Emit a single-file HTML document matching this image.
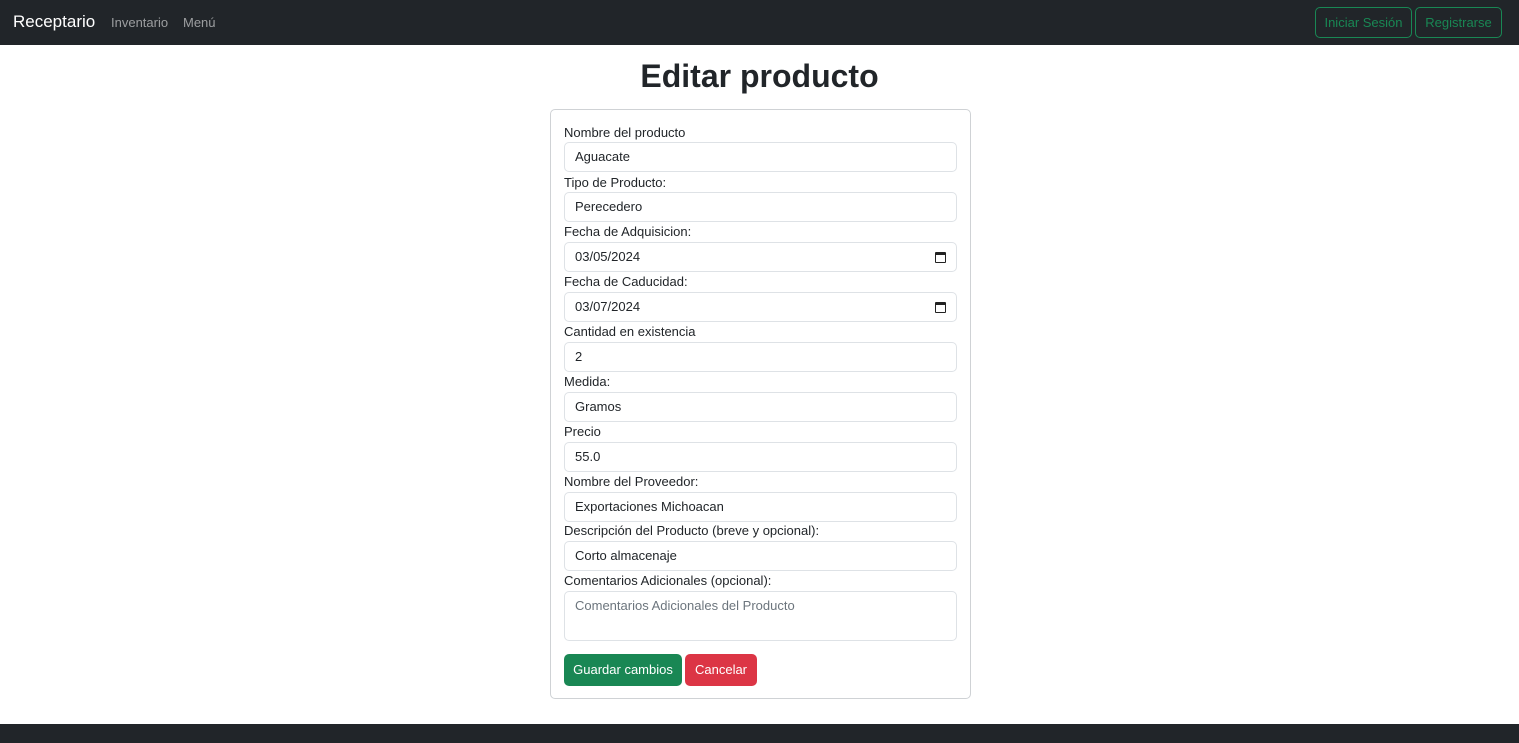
<!DOCTYPE html>
<html><head><meta charset="utf-8"><style>
*{box-sizing:border-box;margin:0;padding:0}
body{width:1519px;height:743px;background:#fff;font-family:"Liberation Sans",sans-serif;color:#212529;position:relative;overflow:hidden}
nav{position:absolute;left:0;top:0;width:1519px;height:45px;background:#212529}
.brand{position:absolute;left:13px;top:12px;font-size:17px;color:#fff}
.nl{position:absolute;top:15px;font-size:13px;color:rgba(255,255,255,.55)}
.ob{position:absolute;top:7px;height:31px;border:1px solid #198754;border-radius:5px;color:#198754;font-size:13px;line-height:29px;text-align:center}
h1{position:absolute;top:58px;left:0;width:1519px;text-align:center;font-size:32px;font-weight:bold}
.card{position:absolute;left:550px;top:109px;width:421px;height:590px;border:1px solid #cfd2d5;border-radius:5px}
.lab{position:absolute;left:13px;font-size:13px}
.inp{position:absolute;left:13px;width:393px;height:30px;border:1px solid #dee2e6;border-radius:5px;font-size:13px;line-height:28px;padding-left:10px}
.cal{position:absolute;right:10px;top:9px;width:11px;height:11px;border:1.5px solid #222;border-top-width:3px;border-radius:1px}
.btn{position:absolute;top:544px;height:32px;border-radius:5px;color:#fff;font-size:13px;line-height:32px;text-align:center}
footer{position:absolute;left:0;top:724px;width:1519px;height:19px;background:#212529}
</style></head><body>
<nav><span class="brand">Receptario</span><span class="nl" style="left:111px">Inventario</span><span class="nl" style="left:183px">Menú</span>
<div class="ob" style="left:1315px;width:97px">Iniciar Sesión</div><div class="ob" style="left:1415px;width:87px">Registrarse</div></nav>
<h1>Editar producto</h1>
<div class="card">
<div class="lab" style="top:15px">Nombre del producto</div><div class="inp" style="top:32px">Aguacate</div>
<div class="lab" style="top:65px">Tipo de Producto:</div><div class="inp" style="top:82px">Perecedero</div>
<div class="lab" style="top:114px">Fecha de Adquisicion:</div><div class="inp" style="top:132px">03/05/2024<span class="cal"></span></div>
<div class="lab" style="top:164px">Fecha de Caducidad:</div><div class="inp" style="top:182px">03/07/2024<span class="cal"></span></div>
<div class="lab" style="top:214px">Cantidad en existencia</div><div class="inp" style="top:232px">2</div>
<div class="lab" style="top:264px">Medida:</div><div class="inp" style="top:282px">Gramos</div>
<div class="lab" style="top:314px">Precio</div><div class="inp" style="top:332px">55.0</div>
<div class="lab" style="top:364px">Nombre del Proveedor:</div><div class="inp" style="top:382px">Exportaciones Michoacan</div>
<div class="lab" style="top:413px">Descripción del Producto (breve y opcional):</div><div class="inp" style="top:431px">Corto almacenaje</div>
<div class="lab" style="top:463px">Comentarios Adicionales (opcional):</div><div class="inp" style="top:481px;height:50px;line-height:28px;color:#6c757d">Comentarios Adicionales del Producto</div>
<div class="btn" style="left:13px;width:118px;background:#198754">Guardar cambios</div>
<div class="btn" style="left:134px;width:72px;background:#dc3545">Cancelar</div>
</div>
<footer></footer>
</body></html>
